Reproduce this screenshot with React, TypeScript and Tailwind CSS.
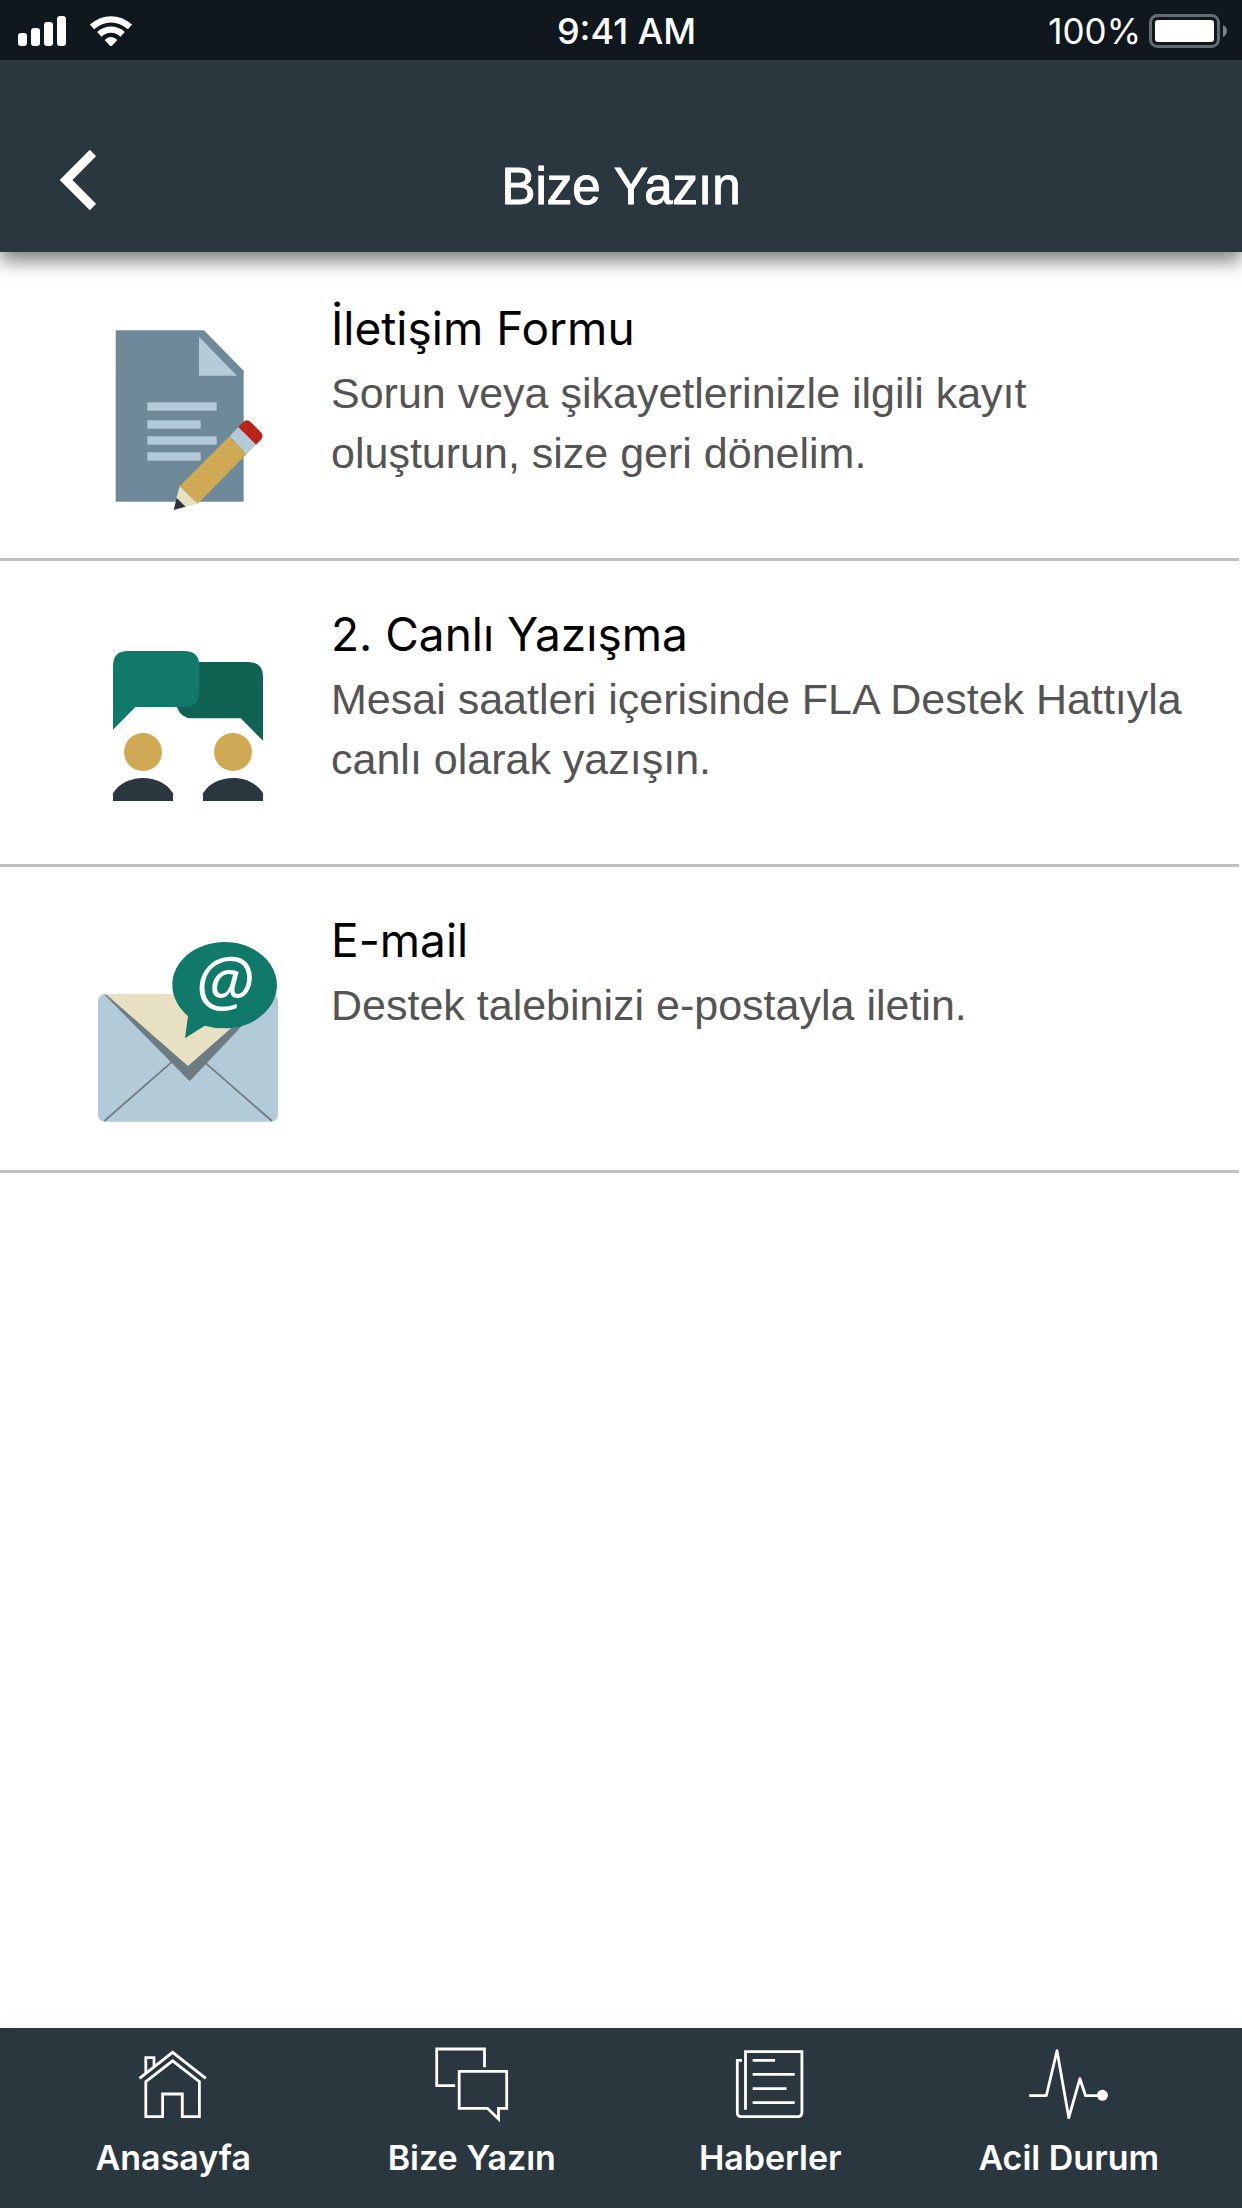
import type { ReactNode } from "react";

const inter = "font-['Inter','Liberation_Sans',sans-serif]";

function SignalIcon() {
  return (
    <svg className="h-[30px] w-[48px]" viewBox="0 0 48 30" fill="white" aria-hidden="true">
      <rect x="0" y="17" width="9" height="13" rx="3" />
      <rect x="13" y="12" width="9" height="18" rx="3" />
      <rect x="26" y="6" width="9" height="24" rx="3" />
      <rect x="39" y="0" width="9" height="30" rx="3" />
    </svg>
  );
}

function WifiIcon() {
  return (
    <svg className="h-[30px] w-[42px]" viewBox="270 44 126 90" aria-hidden="true">
      <g fill="none" stroke="white" strokeWidth="19">
        <path d="M276 77Q302 54 333 54T390 77" />
        <path d="M298 99Q313 85 333 85T368 99" />
      </g>
      <path d="M314 116Q333 98 352 116L336 133Q333 136 330 133Z" fill="white" />
    </svg>
  );
}

function BatteryIcon() {
  return (
    <svg className="h-[34px] w-[78px]" viewBox="0 0 78 34" aria-hidden="true">
      <rect x="1.5" y="1.5" width="68" height="31" rx="7" fill="none" stroke="#626b70" strokeWidth="3" />
      <rect x="6" y="6" width="59" height="22" rx="3" fill="white" />
      <path d="M74 11Q78 13 78 17T74 23Z" fill="#7b8286" />
    </svg>
  );
}

function FormIcon() {
  return (
    <svg className="size-[180px] shrink-0" viewBox="24 60 540 540" aria-hidden="true">
      <path d="M77 61H342L461 182V575H77Z" fill="#6e8a98" />
      <path d="M327 80L441 197H327Z" fill="#b3cad8" />
      <g fill="#b3cad8">
        <rect x="172" y="277" width="208" height="25" />
        <rect x="172" y="331" width="160" height="25" />
        <rect x="172" y="379" width="208" height="25" />
        <rect x="172" y="427" width="160" height="25" />
      </g>
      <path d="M419 379L470 432L323 581L269 529Z" fill="#d0a954" />
      <path d="M445 351L498 404L470 432L419 379Z" fill="#b3cad8" />
      <path d="M445 351L459 337Q470 325 482 336L512 366Q523 377 513 389L498 404Z" fill="#bb241b" />
      <path d="M269 529L323 581L287 590L259 565Z" fill="#e7e0c2" />
      <path d="M260 564L287 590L251 600Z" fill="#2b373f" />
    </svg>
  );
}

function ChatPeopleIcon() {
  return (
    <svg className="size-[180px] shrink-0" viewBox="24 18 540 540" aria-hidden="true">
      <path d="M300 96H474Q519 96 519 141V332L452 265H306Q272 265 261 231V130Z" fill="#106253" />
      <path d="M113 63H283Q328 63 328 108V187Q328 231 283 231H136L69 299V108Q69 63 113 63Z" fill="#117969" />
      <circle cx="159" cy="366" r="57" fill="#d0a954" />
      <circle cx="429" cy="366" r="57" fill="#d0a954" />
      <path d="M69 490C105 429 213 429 249 490V513H69Z" fill="#2b373f" />
      <path d="M339 490C375 429 483 429 519 490V513H339Z" fill="#2b373f" />
    </svg>
  );
}

function EmailIcon() {
  return (
    <svg className="size-[180px] shrink-0 overflow-visible" viewBox="54 66 540 540" aria-hidden="true">
      <rect x="54" y="222" width="540" height="383" rx="20" fill="#b3cad8" />
      <path d="M73 603L274 427M576 603L378 430" stroke="#6d7b83" strokeWidth="5" fill="none" />
      <path d="M74 224L329 484L574 224Z" fill="#6d7b83" />
      <path d="M77 222H570L324 438Z" fill="#e7e0c2" />
      <path d="M434 66C521 66 591 124 591 195S521 325 434 325Q402 325 374 317L315 355L324 288C296 264 277 232 277 195C277 124 347 66 434 66Z" fill="#117969" />
      <text x="434" y="255" textAnchor="middle" fill="white" className="font-['Open_Sans',sans-serif] text-[204px] italic">
        @
      </text>
    </svg>
  );
}

function TabIcon({ children }: { children: ReactNode }) {
  return (
    <svg className="size-20" viewBox="0 0 80 80" fill="none" stroke="white" strokeWidth="2.8" aria-hidden="true">
      {children}
    </svg>
  );
}

const contactOptions = [
  {
    title: "İletişim Formu",
    description: "Sorun veya şikayetlerinizle ilgili kayıt oluşturun, size geri dönelim.",
    icon: <FormIcon />,
  },
  {
    title: "2. Canlı Yazışma",
    description: "Mesai saatleri içerisinde FLA Destek Hattıyla canlı olarak yazışın.",
    icon: <ChatPeopleIcon />,
  },
  {
    title: "E-mail",
    description: "Destek talebinizi e-postayla iletin.",
    icon: <EmailIcon />,
  },
];

const tabs = [
  {
    label: "Anasayfa",
    icon: (
      <TabIcon>
        <path d="M6.5 32.3L39.6 6.3L72.8 32.3" />
        <path d="M12.8 70.7V35.7L39.6 14.8L66.4 35.7V70.7H49.3V48H29.6V70.7Z" />
        <path d="M12.8 27V11.7H21V20" />
      </TabIcon>
    ),
  },
  {
    label: "Bize Yazın",
    icon: (
      <TabIcon>
        <path d="M23.2 39.7H4.7V3H52.5V21.3" />
        <path d="M27.2 25.3H74.7V62.3H66.5V73L55.4 62.3H27.2Z" />
      </TabIcon>
    ),
  },
  {
    label: "Haberler",
    icon: (
      <TabIcon>
        <path d="M12 14.3H7.3V66.5Q7.3 70.7 11.5 70.7H67.7Q71.9 70.7 71.9 66.5V5.7H15.5V63.7" />
        <path d="M22.6 14.3H45.1M22.6 28.3H64.7M22.6 42.7H56.5M22.6 56.7H64.7" />
      </TabIcon>
    ),
  },
  {
    label: "Acil Durum",
    icon: (
      <TabIcon>
        <path d="M0.2 49.7H17.3L28 4.7L39.8 71.7L50.9 32.7L56.6 49.7H70" strokeLinejoin="round" />
        <circle cx="73.4" cy="49.3" r="5.5" fill="white" stroke="none" />
      </TabIcon>
    ),
  },
];

export default function App() {
  return (
    <div className="flex min-h-screen flex-col bg-white font-['Liberation_Sans',Arial,sans-serif]">
      <header className="text-white shadow-[0_9px_18px_rgba(0,0,0,0.5)]">
        <div className={`${inter} grid h-[60px] grid-cols-3 items-center bg-[#10181e] pr-[15px] pl-[18px] text-[36px] leading-[60px]`}>
          <div className="flex items-center gap-6">
            <SignalIcon />
            <WifiIcon />
          </div>
          <div className="pt-px pl-2 text-center font-medium">9:41 AM</div>
          <div className="flex items-center justify-end gap-2">
            <span className="pt-px text-[35px]">100%</span>
            <BatteryIcon />
          </div>
        </div>
        <div className="grid h-[192px] grid-cols-[1fr_auto_1fr] items-center bg-[#2b373f] px-[60px] pt-[62px]">
          <button type="button" aria-label="Geri" className="-mt-[14px] w-fit">
            <svg className="h-[60px] w-[36px]" viewBox="0 0 36 60" fill="none" stroke="white" strokeWidth="9" aria-hidden="true">
              <path d="M33 3L6 30L33 57" />
            </svg>
          </button>
          <h1 className="text-[51px] leading-[60px] [-webkit-text-stroke:1px_white]">Bize Yazın</h1>
        </div>
      </header>

      <main className="flex-1 pt-[3px]">
        <ul className="mr-[3px]">
          {contactOptions.map((option) => (
            <li key={option.title} className="border-b-[3px] border-[#c0c0c0]">
              <button type="button" className="flex min-h-[303px] w-full items-start gap-[53px] pr-8 pl-[98px] text-left">
                <span className="pt-[75px]">{option.icon}</span>
                <span className="pt-[40px]">
                  <span className={`${inter} mb-[2px] block text-[46px] leading-[66px] text-black`}>{option.title}</span>
                  <span className="block text-[43px] leading-[60px] text-[#545454]">{option.description}</span>
                </span>
              </button>
            </li>
          ))}
        </ul>
      </main>

      <nav className={`${inter} grid h-[180px] grid-cols-4 bg-[#2b373f] px-6 shadow-[0_-3px_15px_rgba(0,0,0,0.05)]`}>
        {tabs.map((tab) => (
          <a key={tab.label} href="#" className="flex flex-col items-center pt-[18px] text-[34px] leading-[40px] font-semibold text-white">
            {tab.icon}
            <span className="mt-[12px] whitespace-nowrap">{tab.label}</span>
          </a>
        ))}
      </nav>
    </div>
  );
}
